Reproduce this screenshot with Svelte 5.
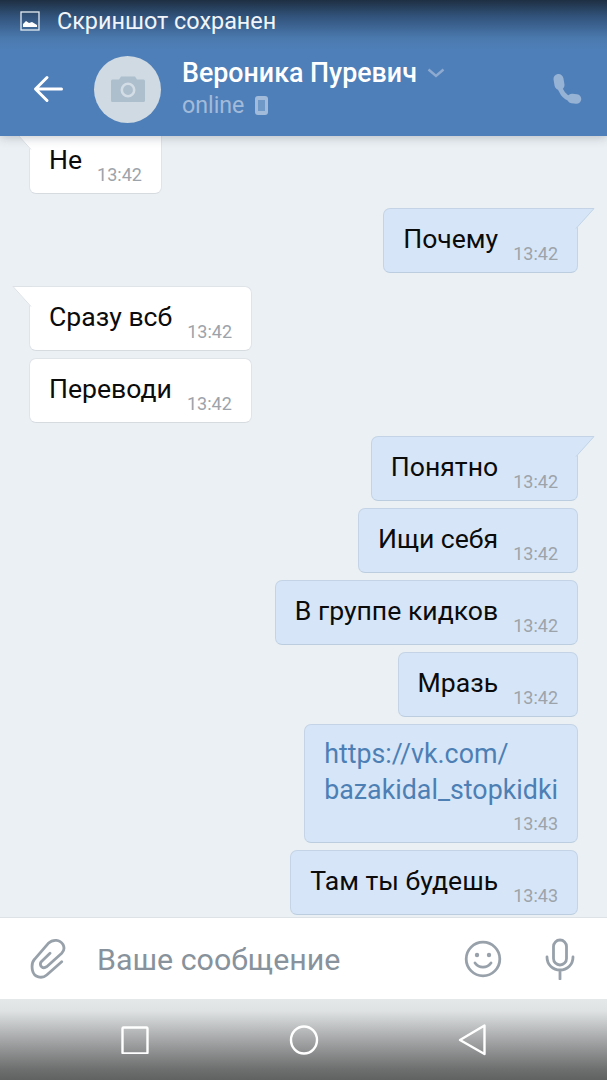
<script>
  const messages = [
    { out: false, text: 'Не', time: '13:42', tail: true, clipped: true },
    { out: true, text: 'Почему', time: '13:42', tail: true, first: true },
    { out: false, text: 'Сразу всб', time: '13:42', tail: true, first: true },
    { out: false, text: 'Переводи', time: '13:42' },
    { out: true, text: 'Понятно', time: '13:42', tail: true, first: true },
    { out: true, text: 'Ищи себя', time: '13:42' },
    { out: true, text: 'В группе кидков', time: '13:42' },
    { out: true, text: 'Мразь', time: '13:42' },
    { out: true, link: ['https://vk.com/', 'bazakidal_stopkidki'], time: '13:43' },
    { out: true, text: 'Там ты будешь', time: '13:43' }
  ];
</script>

<div class="screen">
  <header class="header">
    <div class="status">
      <svg class="status-icon" width="20" height="20" viewBox="0 0 20 20">
        <rect x="1" y="1" width="18" height="18" fill="none" stroke="#e4ebf3" stroke-width="1.3" />
        <path d="M3 16v-3l3-3 3 2 3-1 5 3v2z" fill="#fff" />
      </svg>
      <span class="status-text">Скриншот сохранен</span>
    </div>
    <div class="bar">
      <svg class="back" width="30" height="30" viewBox="0 0 30 30">
        <path d="M28.500 15H3M14 3.500 2.500 15 14 26.500" fill="none" stroke="#fff" stroke-width="3" stroke-linecap="round" stroke-linejoin="round" />
      </svg>
      <div class="avatar">
        <svg width="34" height="26" viewBox="0 0 34 26">
          <path d="M1.500 3.500H8L10 .5H24L26 3.500H32.500A1.500 1.500 0 0 1 34 5V24.500A1.500 1.500 0 0 1 32.500 26H1.500A1.500 1.500 0 0 1 0 24.500V5A1.500 1.500 0 0 1 1.500 3.500Z" fill="#adbecd" />
          <circle cx="17" cy="14" r="6.200" fill="none" stroke="#d3dde5" stroke-width="2.600" />
        </svg>
      </div>
      <div class="who">
        <div class="name-row">
          <span class="name">Вероника Пуревич</span>
          <svg width="18" height="10" viewBox="0 0 18 10">
            <path d="M1.500 1.500 9 8l7.500-6.500" fill="none" stroke="#8eaad0" stroke-width="2.400" />
          </svg>
        </div>
        <div class="online-row">
          <span class="online">online</span>
          <svg width="13" height="19" viewBox="0 0 13 19">
            <rect x="0" y="0" width="13" height="19" rx="3" fill="#a3bbda" />
            <rect x="3" y="4" width="7" height="11" fill="#7199c8" />
          </svg>
        </div>
      </div>
      <svg class="phone" width="30" height="30" viewBox="0 0 30 30">
        <path d="M7.500 11C8 17 12.500 23.500 19 25" fill="none" stroke="#96b2d5" stroke-width="5" />
        <path d="M6.500 5 7.500 11" fill="none" stroke="#96b2d5" stroke-width="10" stroke-linecap="round" />
        <path d="M20 24.500 24.500 25" fill="none" stroke="#96b2d5" stroke-width="9.500" stroke-linecap="round" />
      </svg>
    </div>
  </header>

  <main class="chat">
    {#each messages as m}
      <div class="row" class:out={m.out} class:first={m.first} class:clipped={m.clipped}>
        <div class="bubble" class:link-bubble={m.link}>
          {#if m.tail}
            <svg class="tail" width="20" height="22" viewBox="0 0 20 22">
              <path d={m.out ? 'M0 1H19L1 21Z' : 'M20 1H1L19 21Z'} fill={m.out ? '#d6e6f8' : '#fff'} />
              <path d={m.out ? 'M0 .5H19L1 20.500' : 'M20 .5H1L19 20.500'} fill="none" stroke={m.out ? '#c4d4e6' : '#dde2e7'} stroke-width="1" />
            </svg>
          {/if}
          {#if m.link}
            <div class="link">{m.link[0]}<br />{m.link[1]}</div>
          {:else}
            <span class="text">{m.text}</span>
          {/if}
          <span class="time">{m.time}</span>
        </div>
      </div>
    {/each}
  </main>

  <footer class="composer">
    <svg class="clip" width="38" height="42" viewBox="0 0 38 42">
      <path d="M33.700 23.700 18.700 37C14 41 6 39.500 4.500 32.500 3.600 28 4.500 23.500 6.500 21.300L20.300 5.300C25 .8 32 1.500 35 6.500 36.500 9.500 36 13 33.700 15.300L18.700 28.700C15 31.500 11 28 13 24L22 15.300" fill="none" stroke="#98a1aa" stroke-width="2.800" stroke-linecap="round" stroke-linejoin="round" />
    </svg>
    <span class="placeholder">Ваше сообщение</span>
    <svg class="smile" width="38" height="38" viewBox="0 0 38 38">
      <circle cx="19" cy="19" r="16.800" fill="none" stroke="#98a1aa" stroke-width="2.800" />
      <circle cx="13" cy="15" r="2.200" fill="#98a1aa" />
      <circle cx="25" cy="15" r="2.200" fill="#98a1aa" />
      <path d="M11 23c4 5.500 12 5.500 16 0" fill="none" stroke="#98a1aa" stroke-width="2.800" stroke-linecap="round" />
    </svg>
    <svg class="mic" width="30" height="42" viewBox="0 0 30 42">
      <rect x="8.500" y="2" width="13" height="25" rx="6.500" fill="none" stroke="#98a1aa" stroke-width="2.800" />
      <path d="M2 19c0 8 6 13 13 13s13-5 13-13M15 32v9" fill="none" stroke="#98a1aa" stroke-width="2.800" stroke-linecap="round" />
    </svg>
  </footer>

  <nav class="nav">
    <svg width="29" height="28" viewBox="0 0 29 28">
      <rect x="2.500" y="1.500" width="25" height="26" rx="1" fill="none" stroke="#fff" stroke-width="2.400" />
    </svg>
    <svg width="30" height="30" viewBox="0 0 30 30">
      <ellipse cx="15" cy="15" rx="13" ry="13.500" fill="none" stroke="#fff" stroke-width="2.400" />
    </svg>
    <svg width="29" height="34" viewBox="0 0 29 34">
      <path d="M26.500 2.500V31L2 17Z" fill="none" stroke="#fff" stroke-width="2.400" stroke-linejoin="round" />
    </svg>
  </nav>
</div>

<style>
  :global(body) {
    margin: 0;
  }

  .screen {
    width: 607px;
    height: 1080px;
    display: flex;
    flex-direction: column;
    overflow: hidden;
    background: #ebf0f4;
    font-family: Roboto, "Noto Sans", sans-serif;
  }

  .header {
    height: 136px;
    flex: none;
    position: relative;
    z-index: 2;
    display: flex;
    flex-direction: column;
    background: linear-gradient(#1e2f42 0, #31527a 16px, #4a79ae 38px, #4f7fb8 50px);
    box-shadow: 0 1px 10px rgba(60, 70, 85, 0.32);
  }

  .status {
    height: 42px;
    display: flex;
    align-items: center;
    gap: 17px;
    padding-left: 20px;
    color: #f1f5fa;
    font-size: 23.400px;
  }

  .bar {
    flex: 1;
    display: flex;
    align-items: center;
    padding: 0 25px 0 33px;
  }

  .avatar {
    width: 67px;
    height: 67px;
    margin-left: 31px;
    border-radius: 50%;
    background: #cfdae3;
    display: flex;
    align-items: center;
    justify-content: center;
    flex: none;
  }

  .who {
    margin-left: 21px;
    flex: 1;
    display: flex;
    flex-direction: column;
    gap: 1px;
    margin-top: -3px;
  }

  .name-row {
    display: flex;
    align-items: center;
    gap: 10px;
    height: 34px;
  }

  .name {
    color: #fff;
    font-size: 26.800px;
    font-weight: 500;
    white-space: nowrap;
  }

  .online-row {
    display: flex;
    align-items: center;
    gap: 11px;
    height: 28px;
  }

  .online {
    color: #a3bbda;
    font-size: 23.200px;
  }

  .chat {
    flex: 1;
    min-height: 0;
    overflow: hidden;
    display: flex;
    flex-direction: column;
    gap: 8px;
    padding: 0 29px;
  }

  .row {
    display: flex;
    flex: none;
  }

  .row.out {
    justify-content: flex-end;
  }

  .row.first {
    margin-top: 6px;
  }

  .row.clipped {
    margin-top: -7px;
    margin-bottom: 1px;
  }

  .bubble {
    position: relative;
    box-sizing: border-box;
    height: 65px;
    display: flex;
    align-items: flex-start;
    gap: 15px;
    padding: 14px 19px 0;
    background: #fff;
    border: 1px solid #dfe4e9;
    border-bottom-color: #d6dbe0;
    border-radius: 7px;
    margin-bottom: -1px;
  }

  .out .bubble {
    background: #d6e6f8;
    border-color: #c4d4e6;
    border-bottom-color: #bccde0;
  }

  .first .bubble,
  .clipped .bubble {
    border-top-left-radius: 0;
  }

  .out.first .bubble {
    border-top-left-radius: 7px;
    border-top-right-radius: 0;
  }

  .tail {
    position: absolute;
    top: -1px;
    left: -18px;
  }

  .out .tail {
    left: auto;
    right: -18px;
  }

  .text {
    color: #0b0b0b;
    font-size: 26.600px;
    line-height: 32px;
    white-space: nowrap;
  }

  .time {
    color: #9da3aa;
    font-size: 18px;
    line-height: 22px;
    margin-top: 20px;
    white-space: nowrap;
  }

  .link-bubble {
    height: 119px;
    flex-direction: column;
    gap: 0;
    padding-top: 11px;
  }

  .link {
    color: #4d7fb5;
    font-size: 26.800px;
    line-height: 36px;
    white-space: nowrap;
  }

  .link-bubble .time {
    align-self: flex-end;
    margin-top: 5px;
  }

  .composer {
    height: 82px;
    flex: none;
    box-sizing: border-box;
    display: flex;
    align-items: center;
    background: #fff;
    border-top: 1px solid #dde2e7;
    padding-left: 28px;
  }

  .placeholder {
    margin-left: 31px;
    margin-top: 2px;
    color: #87929c;
    font-size: 30.400px;
    flex: 1;
  }

  .smile {
    margin-right: 43px;
  }

  .mic {
    margin-right: 32px;
  }

  .nav {
    height: 81px;
    flex: none;
    display: flex;
    align-items: center;
    justify-content: space-between;
    box-sizing: border-box;
    padding: 0 120px;
    background: linear-gradient(#e5e8e9 0, #dfe2e3 12px, #a6a8a9 40px, #6e6f6f 70px, #606161 81px);
  }
</style>
